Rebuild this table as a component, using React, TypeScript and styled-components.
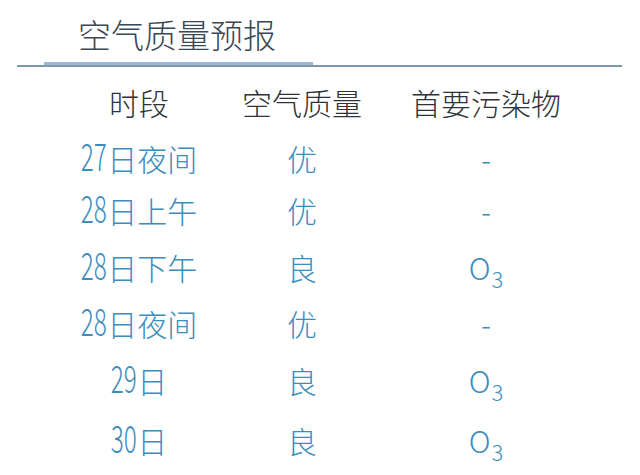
import React from 'react';
import styled, { createGlobalStyle } from 'styled-components';

const GlobalStyle = createGlobalStyle`
  html, body {
    margin: 0;
    padding: 0;
    background: #ffffff;
  }
  body {
    font-family: "Noto Sans CJK SC", "Noto Sans", sans-serif;
  }
`;

const Page = styled.div`
  width: 640px;
  height: 475px;
  overflow: hidden;
  background: #ffffff;
`;

const Title = styled.h1`
  margin: 0;
  padding: 14px 0 0 78px;
  height: 48px;
  box-sizing: border-box;
  font-size: 33px;
  line-height: 40px;
  font-weight: 300;
  color: #3a4756;
`;

const Divider = styled.div`
  margin: 0 18px 0 17px;
  height: 19px;
  display: flex;
  flex-direction: column;
  justify-content: flex-end;
`;

const Accent = styled.div`
  margin-left: 27px;
  width: 269px;
  height: 3px;
  background: #9ab8d3;
`;

const Rule = styled.div`
  height: 2px;
  background: #7d98a8;
`;

const Table = styled.div`
  display: grid;
  grid-template-columns: 158px 168px 200px;
  margin-left: 60px;
  margin-top: 15px;
`;

const HeadCell = styled.div`
  text-align: center;
  font-size: 30px;
  line-height: 40px;
  font-weight: 300;
  color: #2f3338;
  height: 40px;
  margin-bottom: 10px;
`;

const Cell = styled.div<{ $h: number }>`
  text-align: center;
  font-size: 30px;
  line-height: ${(p) => p.$h}px;
  height: ${(p) => p.$h}px;
  font-weight: 300;
  color: #3c8dbb;
  white-space: nowrap;
`;

// tall, condensed digits as in the source slide
const Num = styled.span`
  display: inline-block;
  font-size: 38px;
  line-height: 1;
  font-weight: 300;
  transform: scaleX(0.64);
  transform-origin: right center;
  margin-left: -15px;
  margin-right: 1px;
`;

const Sub = styled.sub`
  font-size: 22px;
  line-height: 1;
  vertical-align: -8px;
  margin-left: 1px;
`;

type Row = { day: string; part: string; level: string; pollutant: string; h: number };

const rows: Row[] = [
  { day: '27', part: '日夜间', level: '优', pollutant: '-', h: 52 },
  { day: '28', part: '日上午', level: '优', pollutant: '-', h: 52 },
  { day: '28', part: '日下午', level: '良', pollutant: 'O3', h: 62 },
  { day: '28', part: '日夜间', level: '优', pollutant: '-', h: 50 },
  { day: '29', part: '日', level: '良', pollutant: 'O3', h: 64 },
  { day: '30', part: '日', level: '良', pollutant: 'O3', h: 56 },
];

const Pollutant: React.FC<{ value: string }> = ({ value }) => {
  if (value === 'O3') {
    return (
      <>
        O<Sub>3</Sub>
      </>
    );
  }
  return <>{value}</>;
};

export default function App() {
  return (
    <Page>
      <GlobalStyle />
      <Title>空气质量预报</Title>
      <Divider>
        <Accent />
        <Rule />
      </Divider>
      <Table>
        <HeadCell>时段</HeadCell>
        <HeadCell>空气质量</HeadCell>
        <HeadCell>首要污染物</HeadCell>
        {rows.map((r, i) => (
          <React.Fragment key={i}>
            <Cell $h={r.h}>
              <Num>{r.day}</Num>
              {r.part}
            </Cell>
            <Cell $h={r.h}>{r.level}</Cell>
            <Cell $h={r.h}>
              <Pollutant value={r.pollutant} />
            </Cell>
          </React.Fragment>
        ))}
      </Table>
    </Page>
  );
}
